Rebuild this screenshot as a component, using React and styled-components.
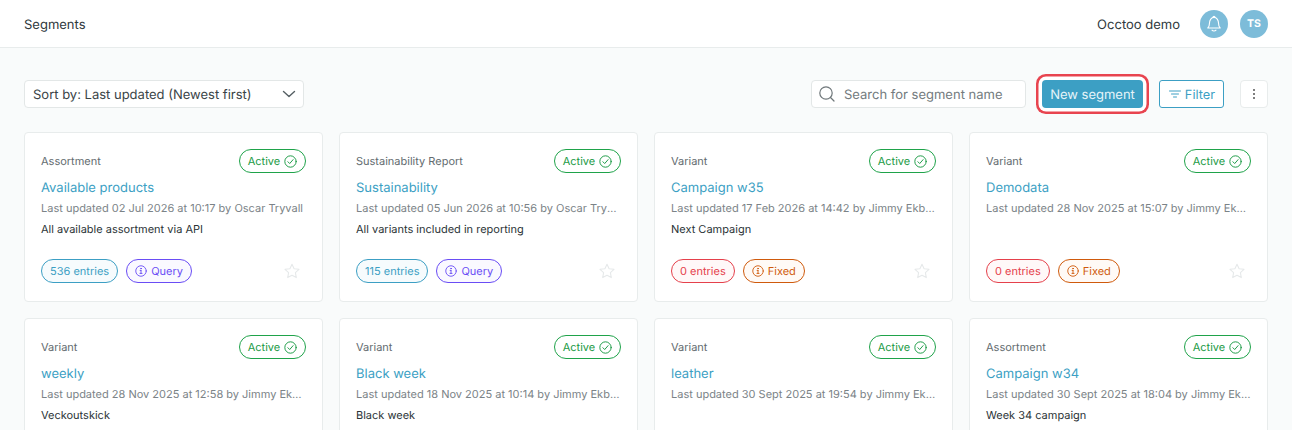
import React from "react";
import styled, { createGlobalStyle } from "styled-components";

const Global = createGlobalStyle`
  html, body { margin: 0; padding: 0; background: #f9fbfb; }
  body { font-family: Inter, "Liberation Sans", sans-serif; color: #2b3437; height: 430px; overflow: hidden; text-rendering: geometricPrecision; }
  * { box-sizing: border-box; }
`;

const Page = styled.div`
  height: 430px;
  overflow: hidden;
`;
const Header = styled.header`
  height: 48px;
  background: #fff;
  border-bottom: 1px solid #e8ecec;
  padding: 0 24px;
  display: flex;
  align-items: center;
  justify-content: space-between;
`;
const Title = styled.div`
  font-size: 13px;
  line-height: 16px;
  padding-top: 2px;
  color: #2f393d;
`;
const HeaderRight = styled.div`
  display: flex;
  align-items: center;
`;
const Workspace = styled.span`
  font-size: 13px;
  padding-top: 2px;
  color: #2f393d;
  margin-right: 20px;
`;
const RoundButton = styled.div`
  width: 28px;
  height: 28px;
  border-radius: 50%;
  background: #7dbcd9;
  color: #fff;
  display: flex;
  align-items: center;
  justify-content: center;
  font-size: 10.5px;
  font-weight: 700;
  margin-left: ${(p) => p.$gap || 0}px;
`;
const Main = styled.main`
  padding: 32px 24px 0;
`;
const Toolbar = styled.div`
  display: flex;
  align-items: center;
  height: 28px;
`;
const Label = styled.span`
  padding-top: 2px;
`;
const SortSelect = styled.div`
  width: 280px;
  height: 28px;
  background: #fff;
  border: 1px solid #e3e7e7;
  border-radius: 4px;
  padding: 0 6px 0 8px;
  display: flex;
  align-items: center;
  justify-content: space-between;
  font-size: 13px;
  color: #3a4447;
`;
const SearchBox = styled.div`
  margin-left: auto;
  width: 215px;
  height: 28px;
  background: #fff;
  border: 1px solid #e3e7e7;
  border-radius: 4px;
  padding: 0 0 0 6px;
  display: flex;
  align-items: center;
  gap: 8px;
  font-size: 13px;
  color: #737b7e;
`;
const NewButton = styled.button`
  margin-left: 16px;
  width: 101px;
  height: 28px;
  border: 0;
  border-radius: 4px;
  background: #3c9fc4;
  color: #e6f4f9;
  font: 400 13px Inter, sans-serif;
  text-rendering: geometricPrecision;
  padding: 2px 0 0;
  box-shadow: 0 0 0 3.5px #fff, 0 0 0 6px #e8444f;
`;
const FilterButton = styled.button`
  margin-left: 16px;
  width: 65px;
  height: 28px;
  border: 1px solid #3c9fc4;
  border-radius: 3px;
  background: #fff;
  color: #3c9fc4;
  font: 400 12.8px Inter, sans-serif;
  text-rendering: geometricPrecision;
  padding: 0;
  display: flex;
  align-items: center;
  justify-content: center;
  gap: 3px;
`;
const KebabButton = styled.button`
  margin-left: 16px;
  width: 28px;
  height: 28px;
  border: 1px solid #e8ecec;
  border-radius: 4px;
  background: #fff;
  color: #555;
  padding: 0;
  display: flex;
  align-items: center;
  justify-content: center;
`;
const Grid = styled.div`
  margin-top: 24px;
  display: grid;
  grid-template-columns: repeat(4, 299px);
  column-gap: 16px;
  row-gap: 16px;
`;
const Card = styled.article`
  height: 170px;
  background: #fff;
  border: 1px solid #e8ecec;
  border-radius: 4px;
  padding: 16px 16px 0;
  display: flex;
  flex-direction: column;
`;
const CardTop = styled.div`
  display: flex;
  align-items: center;
  justify-content: space-between;
  height: 24px;
`;
const Kind = styled.span`
  font-size: 11px;
  color: #636c70;
`;
const Status = styled.span`
  height: 24px;
  width: 67px;
  border: 1px solid #1fa34a;
  border-radius: 12px;
  color: #1b9a45;
  font-size: 11px;
  display: flex;
  align-items: center;
  justify-content: center;
  gap: 4px;
`;
const Name = styled.div`
  margin-top: 7px;
  font-size: 13px;
  line-height: 16px;
  color: #3c9fc4;
`;
const Updated = styled.div`
  margin-top: 5px;
  font-size: 11px;
  line-height: 14px;
  color: #7b8387;
  white-space: nowrap;
  overflow: hidden;
  text-overflow: ellipsis;
`;
const Description = styled.div`
  margin-top: 7px;
  font-size: 11px;
  line-height: 14px;
  color: #2b3437;
  min-height: 14px;
`;
const CardBottom = styled.div`
  margin-top: 23px;
  display: flex;
  align-items: center;
  gap: 8px;
`;
const Tag = styled.span`
  height: 24px;
  padding: 0 8px;
  border: 1px solid ${(p) => p.$color};
  background: ${(p) => p.$bg || "#fff"};
  border-radius: 12px;
  color: ${(p) => p.$color};
  font-size: 11px;
  display: flex;
  align-items: center;
  gap: 4px;
`;
const StarWrap = styled.span`
  margin-left: auto;
  margin-right: 6px;
  display: flex;
`;

const Check = () => (
  <svg width="13" height="13" viewBox="0 0 16 16" fill="none" stroke="currentColor" strokeWidth="1.2" strokeLinecap="round" strokeLinejoin="round">
    <circle cx="8" cy="8" r="7" />
    <path d="M4.8 8.3l2.2 2.2 4.2-4.8" />
  </svg>
);
const Info = () => (
  <svg width="12" height="12" viewBox="0 0 16 16" fill="none" stroke="currentColor" strokeWidth="1.2" strokeLinecap="round">
    <circle cx="8" cy="8" r="7" />
    <path d="M8 7.2v4M6.6 11.2h2.8M6.8 7.2H8" />
    <circle cx="8" cy="4.8" r=".5" fill="currentColor" />
  </svg>
);
const Star = () => (
  <svg width="16" height="16" viewBox="0 0 16 16" fill="none" stroke="#e6e9ea" strokeWidth="1.1" strokeLinejoin="round">
    <path d="M8 1.2l2.1 4.5 4.9.6-3.6 3.4.9 4.9L8 12.2l-4.3 2.4.9-4.9L1 6.3l4.9-.6z" />
  </svg>
);

const segments = [
  { kind: "Assortment", name: "Available products", updated: "Last updated 02 Jul 2026 at 10:17 by Oscar Tryvall", desc: "All available assortment via API", entries: 536, type: "Query" },
  { kind: "Sustainability Report", name: "Sustainability", updated: "Last updated 05 Jun 2026 at 10:56 by Oscar Tryvall", desc: "All variants included in reporting", entries: 115, type: "Query" },
  { kind: "Variant", name: "Campaign w35", updated: "Last updated 17 Feb 2026 at 14:42 by Jimmy Ekbergh", desc: "Next Campaign", entries: 0, type: "Fixed" },
  { kind: "Variant", name: "Demodata", updated: "Last updated 28 Nov 2025 at 15:07 by Jimmy Ekbergh", desc: "", entries: 0, type: "Fixed" },
  { kind: "Variant", name: "weekly", updated: "Last updated 28 Nov 2025 at 12:58 by Jimmy Ekbergh", desc: "Veckoutskick", entries: 0, type: "Fixed" },
  { kind: "Variant", name: "Black week", updated: "Last updated 18 Nov 2025 at 10:14 by Jimmy Ekbergh", desc: "Black week", entries: 0, type: "Fixed" },
  { kind: "Variant", name: "leather", updated: "Last updated 30 Sept 2025 at 19:54 by Jimmy Ekbergh", desc: "", entries: 0, type: "Fixed" },
  { kind: "Assortment", name: "Campaign w34", updated: "Last updated 30 Sept 2025 at 18:04 by Jimmy Ekbergh", desc: "Week 34 campaign", entries: 0, type: "Fixed" },
];

export default function App() {
  return (
    <Page>
      <Global />
      <Header>
        <Title>Segments</Title>
        <HeaderRight>
          <Workspace>Occtoo demo</Workspace>
          <RoundButton>
            <svg width="18" height="19" viewBox="0 0 18 19" fill="none" stroke="#fff" strokeWidth="1.1" strokeLinecap="round" strokeLinejoin="round">
              <path d="M2.800 14c1-1 1.700-2.200 1.700-5 0-3 1.900-5.600 4.500-5.600s4.500 2.600 4.500 5.600c0 2.800.7 4 1.700 5z" />
              <path d="M8 3.400c0-1.400 2-1.400 2 0" />
              <path d="M7 16.200c.9 1 3.100 1 4 0" />
            </svg>
          </RoundButton>
          <RoundButton $gap={12}>TS</RoundButton>
        </HeaderRight>
      </Header>
      <Main>
        <Toolbar>
          <SortSelect>
            <Label>Sort by: Last updated (Newest first)</Label>
            <svg width="16" height="16" viewBox="0 0 16 16" fill="none" stroke="#555f63" strokeWidth="1.4" strokeLinecap="round" strokeLinejoin="round">
              <path d="M2.500 5.500L8 10.500l5.500-5" />
            </svg>
          </SortSelect>
          <SearchBox>
            <svg width="18" height="18" viewBox="0 0 18 18" fill="none" stroke="#6f777a" strokeWidth="1.2" strokeLinecap="round">
              <circle cx="8" cy="8" r="6.200" />
              <path d="M12.500 12.500L16 16" />
            </svg>
            <Label>Search for segment name</Label>
          </SearchBox>
          <NewButton>New segment</NewButton>
          <FilterButton>
            <svg width="14" height="10" viewBox="0 0 14 10" fill="none" stroke="currentColor" strokeWidth="1" strokeLinecap="round">
              <path d="M1.500 2h11M3.500 5h7M5.500 8h3" />
            </svg>
            <Label>Filter</Label>
          </FilterButton>
          <KebabButton>
            <svg width="4" height="12" viewBox="0 0 4 12" fill="#555">
              <circle cx="2" cy="2" r="1" />
              <circle cx="2" cy="6" r="1" />
              <circle cx="2" cy="10" r="1" />
            </svg>
          </KebabButton>
        </Toolbar>
        <Grid>
          {segments.map((s) => {
            const empty = s.entries === 0;
            const query = s.type === "Query";
            return (
              <Card key={s.name}>
                <CardTop>
                  <Kind>{s.kind}</Kind>
                  <Status>Active <Check /></Status>
                </CardTop>
                <Name>{s.name}</Name>
                <Updated>{s.updated}</Updated>
                <Description>{s.desc}</Description>
                <CardBottom>
                  <Tag $color={empty ? "#e5404b" : "#3c9fc4"} $bg={empty ? "#fff8f8" : "#f6fbfd"}>{s.entries} entries</Tag>
                  <Tag $color={query ? "#6a4df5" : "#cf5a0c"} $bg={query ? "#faf9ff" : "#fffaf6"}><Info /> {s.type}</Tag>
                  <StarWrap><Star /></StarWrap>
                </CardBottom>
              </Card>
            );
          })}
        </Grid>
      </Main>
    </Page>
  );
}
